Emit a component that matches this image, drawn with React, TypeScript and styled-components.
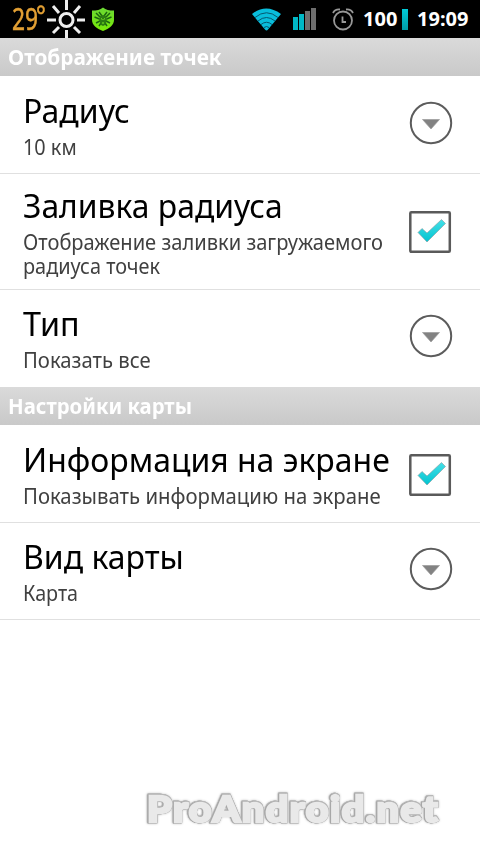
import styled, { createGlobalStyle } from 'styled-components'

const GlobalStyle = createGlobalStyle`
  * {
    box-sizing: border-box;
  }

  body {
    margin: 0;
    background: #fff;
    font-family: 'Noto Sans', 'Open Sans', sans-serif;
  }
`

const Screen = styled.div`
  width: 480px;
  height: 854px;
  display: flex;
  flex-direction: column;
  overflow: hidden;
  background: #fff;
`

const StatusBar = styled.header`
  flex: none;
  height: 38px;
  padding: 0 9px 0 12px;
  display: flex;
  align-items: center;
  justify-content: space-between;
  background: #000;
`

const StatusGroup = styled.div`
  display: flex;
  align-items: center;
  height: 38px;

  svg {
    display: block;
    flex: none;
  }
`

const Temperature = styled.span`
  display: flex;
  width: 34px;
  height: 38px;
  font-size: 30px;
  line-height: 38px;
  color: #e3a034;
  -webkit-text-stroke: 0.5px #e3a034;
  white-space: nowrap;
`

const Degrees = styled.span`
  width: 24px;
`

const DegreeSign = styled.span`
  font-size: 27px;
  line-height: 29px;
`

const Squeeze = styled.span<{ $x: number }>`
  display: inline-block;
  white-space: nowrap;
  transform: scaleX(${({ $x }) => $x});
  transform-origin: 0 50%;
`

const StatusText = styled.span<{ $width: number }>`
  width: ${({ $width }) => $width}px;
  font-size: 20px;
  font-weight: 700;
  line-height: 40px;
  color: #fff;
  white-space: nowrap;
`

const StatusIcon = styled.span<{ $gap: number }>`
  margin-right: ${({ $gap }) => $gap}px;
`

const BatteryBar = styled.span`
  width: 6px;
  height: 21px;
  margin: 1px 9px 0 3px;
  background: linear-gradient(#00cbd8, #009ca8);
`

const SectionHeader = styled.h2`
  flex: none;
  height: 38px;
  margin: 0;
  padding-left: 8px;
  background: linear-gradient(#dadada, #c9c9c9);
  font-size: 21px;
  font-weight: 700;
  line-height: 39px;
  color: #fff;
`

const Row = styled.div<{ $height: number; $top: number; $last: boolean }>`
  height: ${({ $height }) => $height}px;
  padding: ${({ $top }) => $top}px 27px 0 23px;
  display: flex;
  align-items: flex-start;
  justify-content: space-between;
  border-bottom: ${({ $last }) => ($last ? 0 : 1)}px solid #e0e0e0;
`

const Labels = styled.div`
  width: 380px;
`

const Title = styled.div`
  height: 34px;
  margin-bottom: 8px;
  font-size: 33.5px;
  line-height: 34px;
  color: #000;
`

const Line = styled.div`
  height: 24px;
  font-size: 21px;
  line-height: 24px;
  color: #404040;
`

const Control = styled.div<{ $top: number }>`
  flex: none;
  width: 44px;
  height: 44px;
  margin: ${({ $top }) => $top}px 0 0 -20px;

  svg {
    display: block;
  }
`

const Footer = styled.footer`
  margin-top: auto;
  height: 73px;
  padding-left: 147px;
`

const Watermark = styled.span`
  display: inline-block;
  padding-right: 10px;
  font-family: Lato, sans-serif;
  font-size: 36px;
  font-weight: 900;
  line-height: 54px;
  letter-spacing: 1.3px;
  color: #e9e9e9;
  -webkit-text-stroke: 2.4px #e9e9e9;
  transform: scaleX(1.1);
  transform-origin: 0 50%;
  filter: drop-shadow(0.7px 0 0 #a8a8a8) drop-shadow(-0.7px 0 0 #a8a8a8) drop-shadow(0 0.7px 0 #b0b0b0)
    drop-shadow(0 -0.7px 0 #b8b8b8) drop-shadow(0 0 1px #ccc);
`

const SunIcon = () => (
  <svg width="40" height="38" viewBox="0 0 40 38" fill="none" stroke="#eee" strokeWidth="3">
    <circle cx="20.500" cy="20" r="6.500" />
    <path d="M20.500 0v10M20.500 30v8M1 20h9M31 20h8M7 6l6 7M34 6l-6 7M7 33l6-6M34 33l-6-6" />
  </svg>
)

const ShieldIcon = () => (
  <svg width="24" height="26" viewBox="0 0 24 26">
    <defs>
      <linearGradient id="shield" x2="0" y2="1">
        <stop stopColor="#6bd834" />
        <stop offset="1" stopColor="#78ea08" />
      </linearGradient>
    </defs>
    <path d="M12 1.500C15 4 18 4.500 23 4.500V14c0 5-4.500 8.500-11 11C5.500 22.500 1 19 1 14V4.500C6 4.500 9 4 12 1.500z" fill="url(#shield)" />
    <path
      d="M5 7l4 4M19 7l-4 4M3.500 11l5 2M20.500 11l-5 2M5 17l4-2M19 17l-4-2M8 6l3 4M16 6l-3 4M8 20l2-3M16 20l-2-3"
      fill="none"
      stroke="#1b6410"
      strokeWidth="1.500"
    />
    <path d="M9 10l3-1 3 1 1 4-2 5-2 1-2-1-2-5z" fill="#2c7c12" />
    <path d="M10 12.500l1.500 1M14 12.500l-1.500 1M11 17h2" stroke="#7bed20" />
  </svg>
)

const WifiIcon = () => (
  <svg width="32" height="26" viewBox="0 0 32 26">
    <path d="M1 8Q15-3 30 8L17 23.500Q15.500 25.500 14 23.500z" fill="#09bddb" />
    <path
      d="M4 11.500Q15.500 2 27 11.500M7 15Q15.500 8 24 15M10 18.500Q15.500 14 21 18.500M13 21.500Q15.500 19.500 18 21.500"
      fill="none"
      stroke="#05566e"
      strokeWidth="1"
    />
  </svg>
)

const SignalIcon = () => (
  <svg width="24" height="22" viewBox="0 0 24 22">
    <path d="M0 9h5v13H0zM6 6h5v16H6z" fill="#00b8c6" />
    <path d="M12 3h5v19h-5zM18 0h5v22h-5z" fill="#6e6e6e" />
  </svg>
)

const AlarmIcon = () => (
  <svg width="22" height="23" viewBox="0 0 22 23" fill="none" stroke="#989898" strokeWidth="1.800">
    <circle cx="11" cy="12.500" r="9" />
    <path d="M1 5Q3 1 8 1.500M21 5Q19 1 14 1.500M10.500 8.500v5.500H14" />
  </svg>
)

const DropdownIcon = () => (
  <svg width="44" height="44" viewBox="0 0 44 44">
    <circle cx="22" cy="22" r="20.200" fill="none" stroke="#5c5c5c" strokeWidth="2" />
    <path d="M13.500 18.500h17L22 28z" fill="#828282" stroke="#9b9b9b" strokeWidth=".7" />
  </svg>
)

const CheckboxIcon = () => (
  <svg width="44" height="44" viewBox="0 0 44 44">
    <defs>
      <linearGradient id="check" x2="0" y2="1">
        <stop stopColor="#45dfe7" />
        <stop offset="1" stopColor="#02c4d0" />
      </linearGradient>
    </defs>
    <rect x="1.300" y="2.300" width="39.500" height="39.500" rx="1" fill="#fff" stroke="#5a5a5a" strokeWidth="2.500" />
    <path d="M9 22.500l4-4 5 4.500L32.500 9.500l4 4L18 32z" fill="url(#check)" stroke="#879b9d" strokeWidth=".6" />
  </svg>
)

interface Text {
  text: string
  scale: number
}

interface Preference {
  title: Text
  summary: Text[]
  type: 'list' | 'check'
  height: number
  top: number
  controlTop: number
}

interface Section {
  name: Text
  items: Preference[]
}

const sections: Section[] = [
  {
    name: { text: 'Отображение точек', scale: 0.99 },
    items: [
      {
        title: { text: 'Радиус', scale: 0.955 },
        summary: [{ text: '10 км', scale: 0.945 }],
        type: 'list',
        height: 98,
        top: 17,
        controlTop: 8,
      },
      {
        title: { text: 'Заливка радиуса', scale: 0.951 },
        summary: [
          { text: 'Отображение заливки загружаемого', scale: 0.957 },
          { text: 'радиуса точек', scale: 0.947 },
        ],
        type: 'check',
        height: 116,
        top: 14,
        controlTop: 22,
      },
      {
        title: { text: 'Тип', scale: 0.965 },
        summary: [{ text: 'Показать все', scale: 0.965 }],
        type: 'list',
        height: 97,
        top: 16,
        controlTop: 8,
      },
    ],
  },
  {
    name: { text: 'Настройки карты', scale: 0.968 },
    items: [
      {
        title: { text: 'Информация на экране', scale: 0.953 },
        summary: [{ text: 'Показывать информацию на экране', scale: 0.968 }],
        type: 'check',
        height: 98,
        top: 17,
        controlTop: 11,
      },
      {
        title: { text: 'Вид карты', scale: 0.955 },
        summary: [{ text: 'Карта', scale: 0.94 }],
        type: 'list',
        height: 97,
        top: 16,
        controlTop: 8,
      },
    ],
  },
]

const App: React.FC = () => {
  return (
    <>
      <GlobalStyle />
      <Screen>
        <StatusBar>
          <StatusGroup>
            <Temperature>
              <Degrees>
                <Squeeze $x={0.76}>29</Squeeze>
              </Degrees>
              <DegreeSign>
                <Squeeze $x={0.85}>°</Squeeze>
              </DegreeSign>
            </Temperature>
            <StatusIcon $gap={5}>
              <SunIcon />
            </StatusIcon>
            <ShieldIcon />
          </StatusGroup>
          <StatusGroup>
            <StatusIcon $gap={10}>
              <WifiIcon />
            </StatusIcon>
            <StatusIcon $gap={15}>
              <SignalIcon />
            </StatusIcon>
            <StatusIcon $gap={9}>
              <AlarmIcon />
            </StatusIcon>
            <StatusText $width={36}>100</StatusText>
            <BatteryBar />
            <StatusText $width={54}>19:09</StatusText>
          </StatusGroup>
        </StatusBar>
        {sections.map((section, s) => (
          <section key={section.name.text}>
            <SectionHeader>
              <Squeeze $x={section.name.scale}>{section.name.text}</Squeeze>
            </SectionHeader>
            {section.items.map((item, i) => (
              <Row key={item.title.text} $height={item.height} $top={item.top} $last={s === 0 && i === 2}>
                <Labels>
                  <Title>
                    <Squeeze $x={item.title.scale}>{item.title.text}</Squeeze>
                  </Title>
                  {item.summary.map((line) => (
                    <Line key={line.text}>
                      <Squeeze $x={line.scale}>{line.text}</Squeeze>
                    </Line>
                  ))}
                </Labels>
                <Control $top={item.controlTop}>
                  {item.type === 'check' ? <CheckboxIcon /> : <DropdownIcon />}
                </Control>
              </Row>
            ))}
          </section>
        ))}
        <Footer>
          <Watermark>ProAndroid.net</Watermark>
        </Footer>
      </Screen>
    </>
  )
}

export default App
